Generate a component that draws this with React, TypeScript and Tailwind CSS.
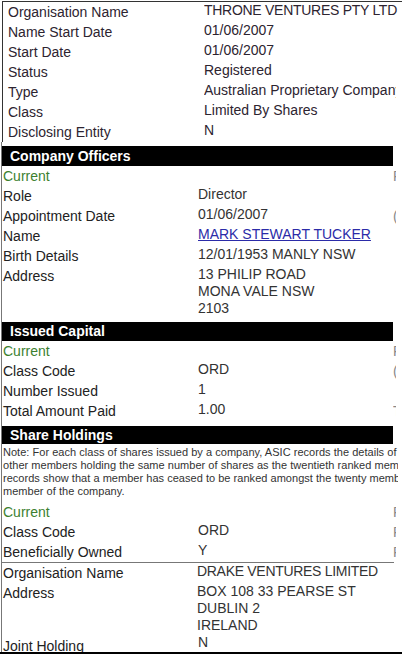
import React from 'react';

type Item = {
  label: string;
  value?: React.ReactNode;
  extra?: string;
  green?: boolean;
  lines?: string[];
};

const topRows: [string, string][] = [
  ['Organisation Name', 'THRONE VENTURES PTY LTD'],
  ['Name Start Date', '01/06/2007'],
  ['Start Date', '01/06/2007'],
  ['Status', 'Registered'],
  ['Type', 'Australian Proprietary Company'],
  ['Class', 'Limited By Shares'],
  ['Disclosing Entity', 'N'],
];

function SectionBar({ title, tall }: { title: string; tall?: boolean }) {
  return (
    <div
      className={
        tall
          ? 'w-[391px] h-[20px] bg-black text-white font-bold text-[14px] leading-[20px] pl-[8px]'
          : 'w-[391px] h-[19px] bg-black text-white font-bold text-[14px] leading-[19px] pl-[8px]'
      }
    >
      {title}
    </div>
  );
}

function Row({ label, value, extra, green, lines }: Item) {
  return (
    <div className="flex min-h-[20px] text-[14px]">
      <div
        className={
          green
            ? 'w-[196px] pl-[1px] leading-[20px] text-[#3d7f30]'
            : 'w-[196px] pl-[1px] leading-[20px] text-[#222]'
        }
      >
        {label}
      </div>
      <div className="w-[195px] leading-[17px] text-[#333] whitespace-nowrap overflow-hidden">
        {lines ? lines.map((l) => <div key={l}>{l}</div>) : value}
      </div>
      <div className="w-[3px] overflow-hidden leading-[20px] text-[#888] whitespace-nowrap">
        {extra}
      </div>
    </div>
  );
}

export default function App() {
  return (
    <div className="relative w-[402px] h-[654px] overflow-hidden bg-white font-['Liberation_Sans',Arial,sans-serif]">
      {/* organisation summary */}
      <div className="mt-[1px] ml-[2px] w-[400px] border-l border-t border-[#333]">
        {topRows.map(([label, value]) => (
          <div key={label} className="flex h-[20px] text-[14px]">
            <div className="w-[201px] pl-[5px] leading-[20px] text-[#2d2430]">{label}</div>
            <div
              className={
                label === 'Organisation Name'
                  ? 'w-[194px] leading-[16px] text-[#2d2430] whitespace-nowrap overflow-hidden tracking-[-0.28px]'
                  : 'w-[192px] leading-[16px] text-[#2d2430] whitespace-nowrap overflow-hidden'
              }
            >
              {value}
            </div>
          </div>
        ))}
      </div>

      <div className="ml-[1px] w-[397px] border-l border-[#777] overflow-hidden pt-[4px]">
        <SectionBar title="Company Officers" tall />
        <Row label="Current" green extra="P" />
        <Row label="Role" value="Director" />
        <Row label="Appointment Date" value="01/06/2007" extra="(" />
        <Row
          label="Name"
          value={<span className="text-[#2b2ba8] underline">MARK STEWART TUCKER</span>}
        />
        <Row label="Birth Details" value="12/01/1953 MANLY NSW" />
        <Row label="Address" lines={['13 PHILIP ROAD', 'MONA VALE NSW', '2103']} />

        <div className="mt-[5px]">
          <SectionBar title="Issued Capital" />
        </div>
        <Row label="Current" green extra="P" />
        <Row label="Class Code" value="ORD" extra="(" />
        <Row label="Number Issued" value="1" />
        <Row label="Total Amount Paid" value="1.00" extra="T" />

        <div className="mt-[5px] w-[391px] h-[18px] bg-black text-white font-bold text-[14px] leading-[18px] pl-[8px]">
          Share Holdings
        </div>
        <div className="mt-[2px] w-[396px] pl-[1px] text-[11px] leading-[13px] tracking-[0.03px] text-[#333] whitespace-nowrap overflow-hidden">
          <div>Note: For each class of shares issued by a company, ASIC records the details of</div>
          <div>other members holding the same number of shares as the twentieth ranked members</div>
          <div>records show that a member has ceased to be ranked amongst the twenty members</div>
          <div>member of the company.</div>
        </div>

        <div className="mt-[4px]">
          <Row label="Current" green extra="P" />
          <Row label="Class Code" value="ORD" extra="P" />
          <Row label="Beneficially Owned" value="Y" extra="P" />
        </div>
        <div className="w-[392px] border-t border-[#777]">
          <Row
            label="Organisation Name"
            value={<span className="tracking-[-0.3px]">DRAKE VENTURES LIMITED</span>}
          />
          <div className="pb-[2px]">
            <Row label="Address" lines={['BOX 108 33 PEARSE ST', 'DUBLIN 2', 'IRELAND']} />
          </div>
          <div className="flex h-[20px] text-[14px]">
            <div className="w-[196px] pl-[1px] leading-[20px] text-[#222]">Joint Holding</div>
            <div className="w-[195px] leading-[12px] text-[#333]">N</div>
          </div>
        </div>
      </div>

      <div className="absolute left-0 bottom-0 w-[402px] h-[2px] bg-black" />
    </div>
  );
}
